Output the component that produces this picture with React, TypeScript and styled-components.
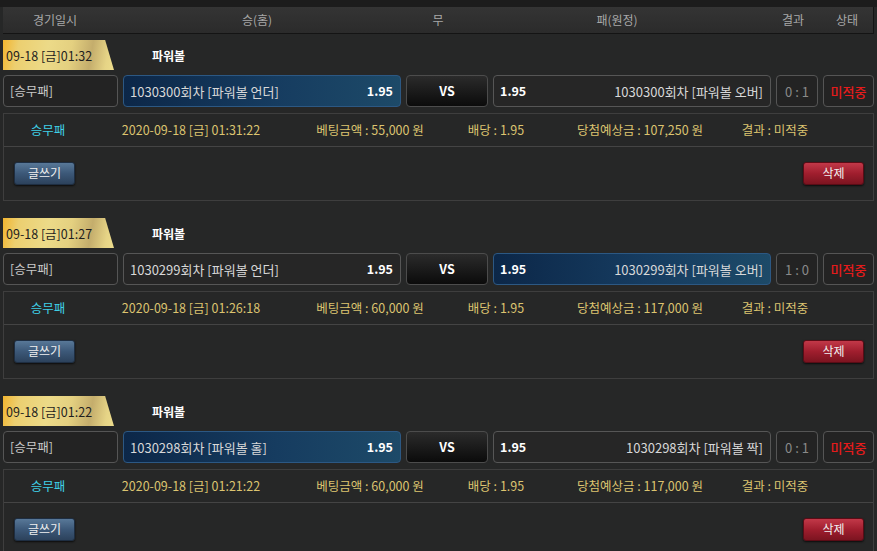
import React from "react";
import styled, { createGlobalStyle, css } from "styled-components";

const GlobalStyle = createGlobalStyle`
  html, body { margin: 0; padding: 0; background: #262727; }
  body { font-family: "Noto Sans CJK KR", "Noto Sans", sans-serif; font-size: 12px; color: #ddd; }
  * { box-sizing: border-box; }
`;

const TopStrip = styled.div`
  height: 7px;
  background: #1c1c1c;
`;

const Content = styled.div`
  padding: 0 3px;
`;

const HeaderBar = styled.div`
  display: grid;
  grid-template-columns: 104px 300px 62px 296px 56px 1fr;
  height: 27px;
  align-items: center;
  background: linear-gradient(#343434, #2b2b2b);
  border-bottom: 1px solid #141414;
  border-right: 1px solid #141414;
  color: #a8a8a8;
  font-size: 12px;
  line-height: 1;
`;

const HeaderCell = styled.div`
  text-align: center;
`;

const Group = styled.section`
  padding-top: 6px;
  padding-bottom: 11px;
  display: flex;
  flex-direction: column;
`;

const TitleRow = styled.div`
  display: flex;
  align-items: center;
  height: 30px;
`;

const DateBadge = styled.div`
  width: 111px;
  height: 30px;
  display: flex;
  align-items: center;
  padding-left: 3px;
  color: #1e1e1e;
  font-size: 12.5px;
  clip-path: polygon(0 0, 92% 0, 100% 100%, 0 100%);
  background: linear-gradient(100deg, #f2b530 0%, #eccf70 14%, #ecda88 40%, #e4d080 60%, #c4ad6c 78%, #e6d486 92%, #ecdc8c 100%);
`;

const LeagueTitle = styled.div`
  margin-left: 38px;
  color: #fff;
  font-weight: bold;
  font-size: 12px;
`;

const BetRow = styled.div`
  display: grid;
  grid-template-columns: 115px 278px 82px 278px 42px 1fr;
  column-gap: 5px;
  margin-top: 5px;
  height: 32px;
`;

const Box = styled.div<{ $align?: "left" | "center" | "between" }>`
  border: 1px solid #555;
  border-radius: 4px;
  background: #232323;
  display: flex;
  align-items: center;
  padding: 0 7px;
  font-size: 12.5px;
  line-height: 1;
  white-space: nowrap;
  justify-content: ${(p) =>
    p.$align === "center" ? "center" : p.$align === "between" ? "space-between" : "flex-start"};
`;

const TypeBox = styled(Box)`
  color: #c8c8c8;
  padding-left: 6px;
`;

const PickBox = styled(Box)<{ $selected: boolean }>`
  color: #d8d8d8;
  padding: 0 7px 0 6px;
  font-size: 13px;
  ${(p) =>
    p.$selected
      ? css`
          background: linear-gradient(90deg, #0c2748 0%, #163c60 55%, #1d4a68 100%);
          border-color: #2c5883;
        `
      : css`
          background: #262626;
          border-color: #565656;
        `}
`;

const Odds = styled.span`
  color: #fff;
  font-weight: bold;
  font-size: 12.5px;
`;

const VsBox = styled(Box)`
  background: linear-gradient(#2b2b2b, #0b0b0b);
  border-color: #4c4c4c;
  color: #fff;
  font-weight: bold;
`;

const ScoreBox = styled(Box)`
  color: #8a8a8a;
  padding: 0;
  font-size: 13px;
`;

const StatusBox = styled(Box)`
  color: #e51b1b;
  padding: 0;
  font-size: 13px;
  font-weight: 500;
`;

const DetailPanel = styled.div`
  margin-top: 6px;
  border: 1px solid #3e3e3e;
  height: 88px;
  display: flex;
  flex-direction: column;
`;

const InfoRow = styled.div`
  display: grid;
  grid-template-columns: 88px 198px 160px 92px 196px 74px 1fr;
  height: 33px;
  align-items: center;
  border-bottom: 1px solid #444;
  font-size: 12.5px;
  line-height: 1;
`;

const InfoCell = styled.div<{ $tone?: "cyan" | "gold" }>`
  text-align: center;
  white-space: nowrap;
  color: ${(p) => (p.$tone === "cyan" ? "#3fd0e6" : "#dcc470")};
`;

const ActionRow = styled.div`
  flex: 1;
  display: flex;
  align-items: center;
  justify-content: space-between;
  padding: 0 9px 1px 10px;
`;

const ActionButton = styled.button<{ $variant: "write" | "delete" }>`
  width: 61px;
  height: 23px;
  border-radius: 3px;
  font-family: inherit;
  font-size: 12px;
  line-height: 1;
  color: #f0f0f0;
  cursor: pointer;
  box-shadow: 0 1px 2px rgba(0, 0, 0, 0.7);
  ${(p) =>
    p.$variant === "write"
      ? css`
          background: linear-gradient(#587898, #3c5878 50%, #2c425c);
          border: 1px solid #1e2e42;
        `
      : css`
          background: linear-gradient(#c23848, #a01e2e 50%, #7c1420);
          border: 1px solid #5a0c16;
        `}
`;

type Bet = {
  date: string;
  round: string;
  home: string;
  away: string;
  sel: "home" | "away";
  score: string;
  time: string;
  bet: string;
  win: string;
};

const bets: Bet[] = [
  {
    date: "09-18 [금]01:32",
    round: "1030300",
    home: "파워볼 언더",
    away: "파워볼 오버",
    sel: "home",
    score: "0 : 1",
    time: "2020-09-18 [금] 01:31:22",
    bet: "55,000",
    win: "107,250",
  },
  {
    date: "09-18 [금]01:27",
    round: "1030299",
    home: "파워볼 언더",
    away: "파워볼 오버",
    sel: "away",
    score: "1 : 0",
    time: "2020-09-18 [금] 01:26:18",
    bet: "60,000",
    win: "117,000",
  },
  {
    date: "09-18 [금]01:22",
    round: "1030298",
    home: "파워볼 홀",
    away: "파워볼 짝",
    sel: "home",
    score: "0 : 1",
    time: "2020-09-18 [금] 01:21:22",
    bet: "60,000",
    win: "117,000",
  },
];

const BetGroup: React.FC<{ b: Bet }> = ({ b }) => (
  <Group>
    <TitleRow>
      <DateBadge>{b.date}</DateBadge>
      <LeagueTitle>파워볼</LeagueTitle>
    </TitleRow>
    <BetRow>
      <TypeBox>[승무패]</TypeBox>
      <PickBox $selected={b.sel === "home"} $align="between">
        <span>{b.round}회차 [{b.home}]</span>
        <Odds>1.95</Odds>
      </PickBox>
      <VsBox $align="center">VS</VsBox>
      <PickBox $selected={b.sel === "away"} $align="between">
        <Odds>1.95</Odds>
        <span>{b.round}회차 [{b.away}]</span>
      </PickBox>
      <ScoreBox $align="center">{b.score}</ScoreBox>
      <StatusBox $align="center">미적중</StatusBox>
    </BetRow>
    <DetailPanel>
      <InfoRow>
        <InfoCell $tone="cyan">승무패</InfoCell>
        <InfoCell>{b.time}</InfoCell>
        <InfoCell>베팅금액 : {b.bet} 원</InfoCell>
        <InfoCell>배당 : 1.95</InfoCell>
        <InfoCell>당첨예상금 : {b.win} 원</InfoCell>
        <InfoCell>결과 : 미적중</InfoCell>
        <div />
      </InfoRow>
      <ActionRow>
        <ActionButton $variant="write">글쓰기</ActionButton>
        <ActionButton $variant="delete">삭제</ActionButton>
      </ActionRow>
    </DetailPanel>
  </Group>
);

export default function App() {
  return (
    <>
      <GlobalStyle />
      <TopStrip />
      <Content>
        <HeaderBar>
          <HeaderCell>경기일시</HeaderCell>
          <HeaderCell>승(홈)</HeaderCell>
          <HeaderCell>무</HeaderCell>
          <HeaderCell>패(원정)</HeaderCell>
          <HeaderCell>결과</HeaderCell>
          <HeaderCell>상태</HeaderCell>
        </HeaderBar>
        {bets.map((b) => (
          <BetGroup key={b.round} b={b} />
        ))}
      </Content>
    </>
  );
}
